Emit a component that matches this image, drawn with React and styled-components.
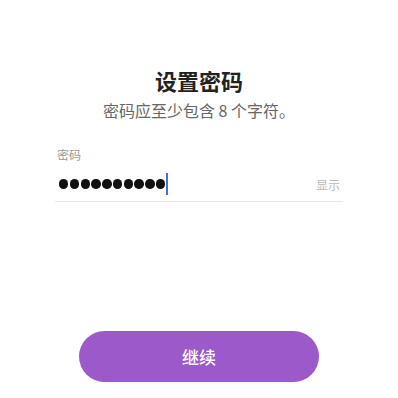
import React from "react";
import styled, { createGlobalStyle } from "styled-components";

const Global = createGlobalStyle`
  html, body { margin: 0; padding: 0; background: #fff; }
  body { font-family: "Noto Sans CJK SC", "Noto Sans", sans-serif; }
`;

const Page = styled.div`
  width: 398px;
  height: 398px;
  box-sizing: border-box;
  padding-top: 65px;
  display: flex;
  flex-direction: column;
  align-items: center;
`;

const Title = styled.h1`
  margin: 0;
  font-size: 22px;
  line-height: 30px;
  font-weight: 700;
  color: #222;
`;

const Subtitle = styled.p`
  margin: 0;
  margin-top: 1px;
  font-size: 16px;
  line-height: 28px;
  color: #666;
`;

const Field = styled.div`
  margin-top: 23px;
  width: 288px;
  display: flex;
  flex-direction: column;
`;

const Label = styled.label`
  font-size: 12px;
  line-height: 16px;
  color: #999;
  padding-left: 2px;
`;

const InputRow = styled.div`
  display: flex;
  align-items: center;
  justify-content: space-between;
  height: 34px;
  border-bottom: 1px solid #e6e6e6;
  margin-top: 4px;
`;

const Masked = styled.div`
  display: flex;
  align-items: center;
  padding-left: 4px;
`;

const Dot = styled.span`
  width: 9.4px;
  height: 9.4px;
  border-radius: 50%;
  background: #111;
  margin-right: 1.4px;
`;

const Caret = styled.span`
  width: 2px;
  height: 22px;
  background: #4a6fd0;
  margin-left: -1px;
`;

const Toggle = styled.button`
  border: 0;
  background: none;
  padding: 0;
  margin-right: 3px;
  font-family: inherit;
  font-size: 12px;
  color: #bbb;
`;

const Button = styled.button`
  margin-top: 129px;
  width: 240px;
  height: 51px;
  border: 0;
  border-radius: 26px;
  background: #9c59c9;
  color: #fff;
  font-family: inherit;
  font-size: 17px;
  font-weight: 500;
`;

export default function App() {
  return (
    <>
      <Global />
      <Page>
        <Title>设置密码</Title>
        <Subtitle>密码应至少包含 8 个字符。</Subtitle>
        <Field>
          <Label>密码</Label>
          <InputRow>
            <Masked>
              {Array.from({ length: 10 }).map((_, i) => (
                <Dot key={i} />
              ))}
              <Caret />
            </Masked>
            <Toggle>显示</Toggle>
          </InputRow>
        </Field>
        <Button>继续</Button>
      </Page>
    </>
  );
}
